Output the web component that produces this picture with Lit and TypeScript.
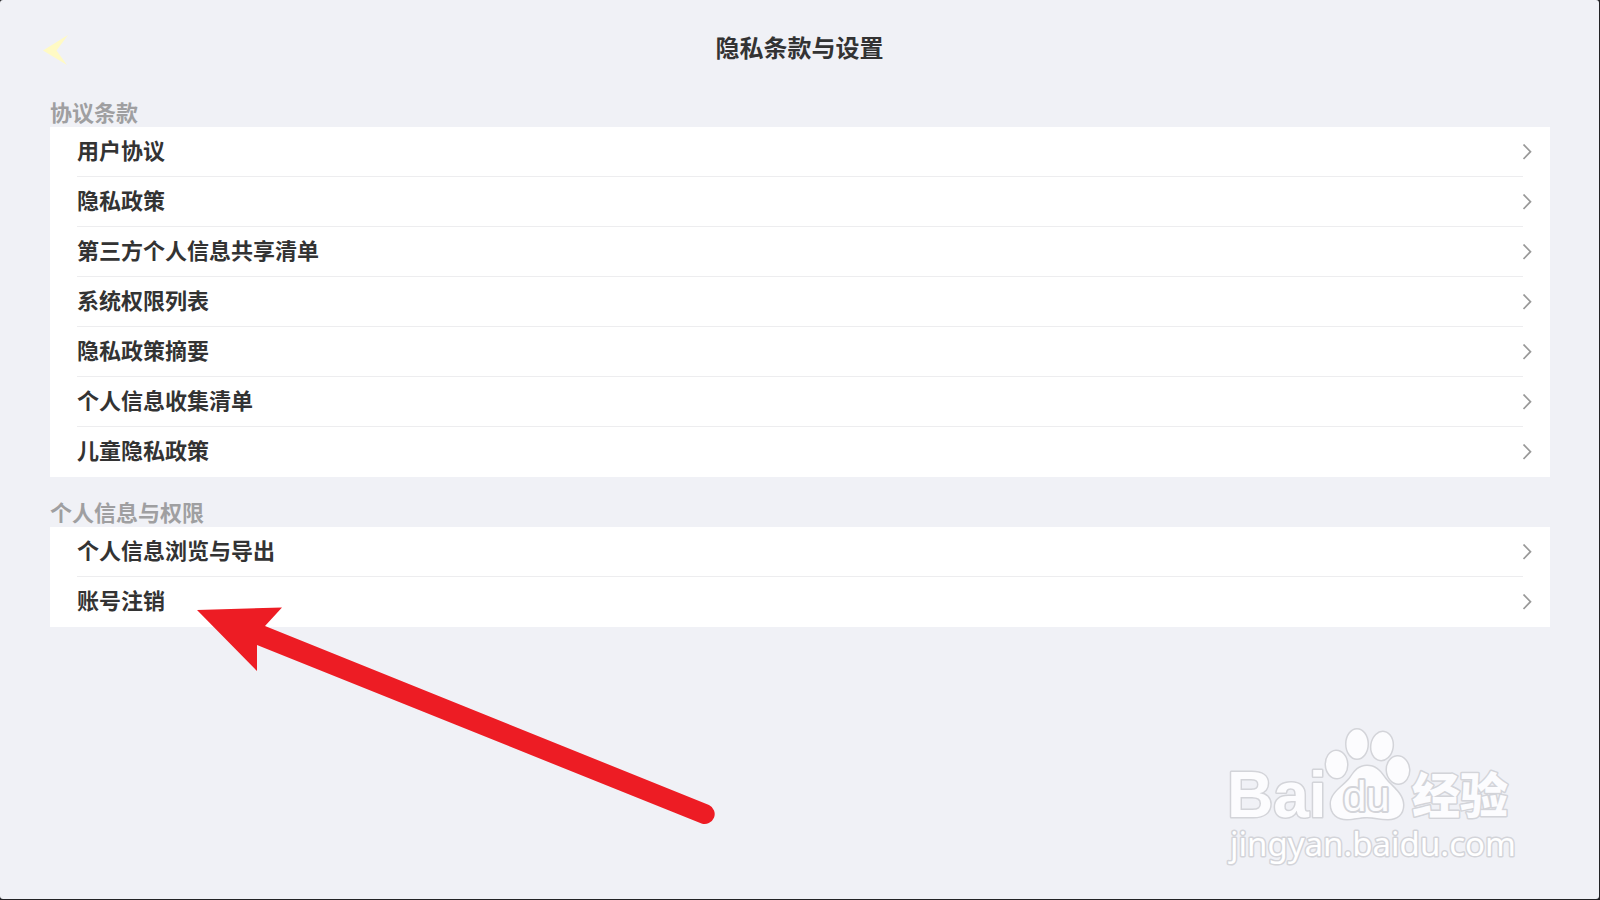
import { LitElement, html, css, svg } from "lit";
import { customElement, property } from "lit/decorators.js";

interface Section {
  title: string;
  items: string[];
}

const SECTIONS: Section[] = [
  {
    title: "协议条款",
    items: [
      "用户协议",
      "隐私政策",
      "第三方个人信息共享清单",
      "系统权限列表",
      "隐私政策摘要",
      "个人信息收集清单",
      "儿童隐私政策",
    ],
  },
  {
    title: "个人信息与权限",
    items: ["个人信息浏览与导出", "账号注销"],
  },
];

@customElement("settings-section")
class SettingsSection extends LitElement {
  @property({ attribute: false }) section!: Section;

  static styles = css`
    :host {
      display: block;
    }
    .title {
      margin: 0;
      padding-bottom: 4px;
      color: #9f9fa1;
      font-size: 22px;
      font-weight: 700;
      line-height: 24px;
    }
    .list {
      margin: 0;
      padding: 0;
      list-style: none;
      background: #fff;
    }
    .row {
      display: flex;
      align-items: stretch;
      height: 50px;
      padding: 0 18px 0 27px;
      color: #333;
      text-decoration: none;
    }
    .label {
      flex: 1;
      box-sizing: border-box;
      border-bottom: 1px solid #ededef;
      font-size: 22px;
      font-weight: 700;
      line-height: 45px;
    }
    .item:last-child .label {
      border-bottom-color: transparent;
    }
    .chevron {
      align-self: center;
      width: 9px;
      height: 16px;
      fill: none;
      stroke: #999;
      stroke-width: 1.7;
    }
  `;

  render() {
    return html`
      <h2 class="title">${this.section.title}</h2>
      <ul class="list">
        ${this.section.items.map(
          (item) => html`
            <li class="item">
              <a class="row" href="#">
                <span class="label">${item}</span>
                <svg class="chevron" viewBox="0 0 9 16" aria-hidden="true">
                  <path d="M0.5 0.500 L7.500 7.700 L0.5 15" />
                </svg>
              </a>
            </li>
          `
        )}
      </ul>
    `;
  }
}

const PAW = svg`
  <ellipse cx="126.500" cy="54.500" rx="10.500" ry="13.500" transform="rotate(-3 126.500 54)" />
  <ellipse cx="147" cy="34" rx="10.500" ry="14.500" />
  <ellipse cx="172" cy="36" rx="10.500" ry="14" transform="rotate(9 172 36)" />
  <ellipse cx="188" cy="60" rx="11" ry="13.500" transform="rotate(-4 188 60)" />
  <path d="M157 56 C149 56 145 61 141 67 C136 75 121 82 121 94
    C121 104 128 109 137 109 C144 109 149 107 157 107
    C164 107 170 109 178 109 C187 109 193 104 193 95
    C193 83 180 76 174 67 C169 60 165 56 157 56 Z" />
`;

@customElement("app-root")
class AppRoot extends LitElement {
  static styles = css`
    :host {
      display: block;
      min-height: 100vh;
      background: #222225;
      font-family: "Noto Sans CJK SC", sans-serif;
    }
    .screen {
      position: relative;
      box-sizing: border-box;
      min-height: calc(100vh - 1px);
      margin-right: 1px;
      padding-bottom: 50px;
      border-radius: 3px;
      background: #f0f1f6;
      overflow: hidden;
    }
    .header {
      display: grid;
      grid-template-columns: 100px 1fr 100px;
      align-items: center;
      height: 99px;
    }
    .back {
      justify-self: start;
      display: block;
      margin-left: 43px;
      padding: 0;
      border: 0;
      background: none;
      line-height: 0;
    }
    .back-icon {
      width: 27px;
      height: 32px;
      fill: #fffac4;
    }
    .heading {
      margin: 0;
      padding-bottom: 6px;
      color: #333;
      font-size: 24px;
      font-weight: 700;
      line-height: 32px;
      text-align: center;
    }
    .content {
      display: grid;
      gap: 22px;
      padding: 0 49px 0 50px;
    }
    .pointer {
      position: absolute;
      left: 197px;
      top: 606px;
      width: 520px;
      height: 220px;
      fill: #ed1c24;
      pointer-events: none;
    }
    .watermark {
      position: absolute;
      right: 69px;
      bottom: 19px;
      width: 320px;
      height: 170px;
      pointer-events: none;
    }
    .edge {
      fill: #fcfcfe;
      stroke: #d3d4d9;
      stroke-width: 3;
      stroke-linejoin: round;
      paint-order: stroke;
    }
    .brand {
      font: 700 64px "Liberation Sans", sans-serif;
    }
    .inner {
      font: 400 42px "Liberation Sans", sans-serif;
      stroke-width: 4;
    }
    .suffix {
      font: 900 48px "Noto Sans CJK SC", sans-serif;
    }
    .domain {
      font: 400 33px "Noto Sans", sans-serif;
      fill: #fff;
      stroke-width: 3;
    }
  `;

  render() {
    return html`
      <main class="screen">
        <header class="header">
          <button class="back" type="button" aria-label="返回">
            <svg class="back-icon" viewBox="0 0 27 32" aria-hidden="true">
              <path d="M0 16.500 L25 1 L13.500 16.500 L24 31 Z" />
            </svg>
          </button>
          <h1 class="heading">隐私条款与设置</h1>
        </header>
        <div class="content">
          ${SECTIONS.map((s) => html`<settings-section .section=${s}></settings-section>`)}
        </div>
        <svg class="pointer" viewBox="0 0 520 220" aria-hidden="true">
          <path d="M0 4 L85 1.500 L68 20 L512 199 A10 10 0 0 1 504.500 217.500 L60 39 V65 Z" />
        </svg>
        <svg class="watermark" viewBox="0 0 320 170">
          <text class="edge brand" x="17" y="107">Bai</text>
          <g class="edge">${PAW}</g>
          <text class="edge inner" x="133" y="101">du</text>
          <text class="edge suffix" x="202" y="103">经验</text>
          <text class="edge domain" x="20" y="146">jingyan.baidu.com</text>
        </svg>
      </main>
    `;
  }
}
